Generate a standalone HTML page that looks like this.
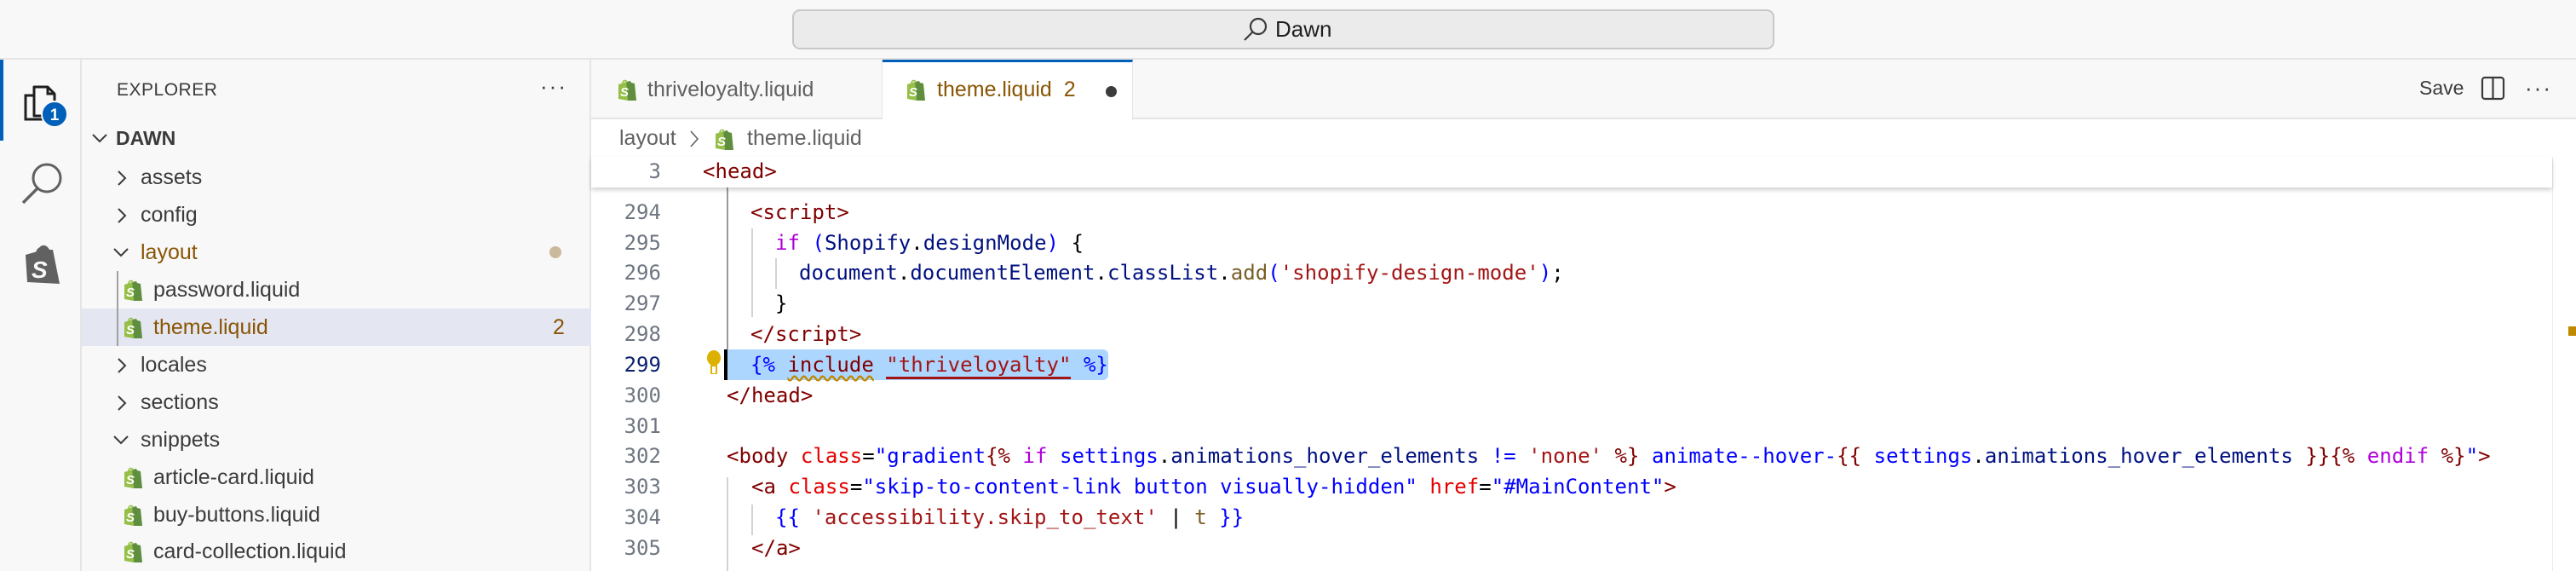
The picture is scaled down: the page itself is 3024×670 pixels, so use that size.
<!DOCTYPE html>
<html><head><meta charset="utf-8"><style>
*{margin:0;padding:0;box-sizing:border-box}
body{width:3024px;height:670px;overflow:hidden;background:#fff;font-family:"Liberation Sans",sans-serif;position:relative}
.abs{position:absolute}
#title{left:0;top:0;width:3024px;height:70px;background:#f8f8f8;border-bottom:2px solid #e5e5e5}
#search{left:930px;top:11px;width:1153px;height:47px;background:#ebebeb;border:2px solid #c8c8c8;border-radius:9px}
#act{left:0;top:70px;width:96px;height:600px;background:#f8f8f8;border-right:2px solid #e5e5e5}
#side{left:96px;top:70px;width:598px;height:600px;background:#f8f8f8;border-right:2px solid #e5e5e5}
.row{position:absolute;left:0;width:598px;height:44px;line-height:44px;font-size:25px;color:#3b3b3b}
.chev{position:absolute;top:0}
#tabs{left:694px;top:70px;width:2330px;height:70px;background:#f8f8f8;border-bottom:2px solid #e5e5e5}
.tab{position:absolute;top:0;height:70px;font-size:25px;line-height:70px}
.code{position:absolute;font-family:"DejaVu Sans Mono","Liberation Mono",monospace;font-size:24.05px;white-space:pre;height:36px;line-height:36px}
.ln{position:absolute;left:700px;width:76px;text-align:right;font-family:"DejaVu Sans Mono","Liberation Mono",monospace;font-size:24.05px;color:#6e7681;height:36px;line-height:36px}
.t{color:#800000}.a{color:#e50000}.s{color:#0000ff}.k{color:#af00db}.v{color:#001080}.f{color:#795e26}.r{color:#a31515}.b{color:#0000ff}
.guide{position:absolute;width:2px;background:#d3d3d3}
</style></head><body>
<div id="title" class="abs"></div>
<div id="search" class="abs"></div>
<svg class="abs" style="left:1458px;top:20px" width="32" height="30" viewBox="0 0 32 30"><circle cx="19" cy="11" r="9" fill="none" stroke="#3b3b3b" stroke-width="2.2"/><line x1="12.5" y1="17.5" x2="3" y2="27" stroke="#3b3b3b" stroke-width="2.2"/></svg>
<div class="abs" style="left:1497px;top:18px;font-size:26px;color:#1f1f1f;line-height:32px">Dawn</div>

<div id="act" class="abs"></div>
<div class="abs" style="left:0;top:70px;width:4px;height:95px;background:#005fb8"></div>
<svg class="abs" style="left:24px;top:90px" width="60" height="60" viewBox="0 0 60 60"><path d="M16 12h16l8 8v26H16z" fill="none" stroke="#1f1f1f" stroke-width="3" stroke-linejoin="round"/><path d="M32 12v8h8" fill="none" stroke="#1f1f1f" stroke-width="3"/><path d="M16 22H6v28h22" fill="none" stroke="#1f1f1f" stroke-width="3"/><circle cx="40" cy="44" r="15" fill="#005fb8" stroke="#f8f8f8" stroke-width="2"/><text x="40" y="51" text-anchor="middle" font-family="Liberation Sans" font-weight="bold" font-size="19" fill="#fff">1</text></svg>
<svg class="abs" style="left:22px;top:185px" width="56" height="60" viewBox="0 0 56 60"><circle cx="33" cy="24" r="16" fill="none" stroke="#616161" stroke-width="3"/><line x1="22" y1="36" x2="5" y2="53" stroke="#616161" stroke-width="3.4"/></svg>
<svg class="abs" style="left:26px;top:285px" width="46" height="50" viewBox="0 0 46 50"><path d="M4 14l14-4c2-8 10-10 14-2l4 0 8 40-38-2z" fill="#616161"/><path d="M17 12c1-6 6-8 9-4" fill="none" stroke="#616161" stroke-width="2"/><text x="11" y="41" font-family="Liberation Sans" font-weight="bold" font-style="italic" font-size="28" fill="#f8f8f8">S</text></svg>

<div id="side" class="abs">
 <div class="abs" style="left:41px;top:24px;font-size:21px;color:#3b3b3b;letter-spacing:0.5px">EXPLORER</div>
 <div class="abs" style="left:538px;top:16px;font-size:26px;color:#3b3b3b;letter-spacing:2px">···</div>
 <div class="row" style="top:70px"><svg class="chev" style="left:11px;top:14px" width="20" height="16"><path d="M2 4l8 8 8-8" fill="none" stroke="#3b3b3b" stroke-width="2"/></svg><span style="position:absolute;left:40px;font-weight:bold;font-size:23px">DAWN</span></div>
 <div class="row" style="top:116px"><svg class="chev" style="left:40px;top:13px" width="14" height="20"><path d="M3 2l8 8-8 8" fill="none" stroke="#3b3b3b" stroke-width="2"/></svg><span style="position:absolute;left:69px">assets</span></div>
 <div class="row" style="top:160px"><svg class="chev" style="left:40px;top:13px" width="14" height="20"><path d="M3 2l8 8-8 8" fill="none" stroke="#3b3b3b" stroke-width="2"/></svg><span style="position:absolute;left:69px">config</span></div>
 <div class="row" style="top:204px"><svg class="chev" style="left:36px;top:14px" width="20" height="16"><path d="M2 4l8 8 8-8" fill="none" stroke="#3b3b3b" stroke-width="2"/></svg><span style="position:absolute;left:69px;color:#895503">layout</span><span style="position:absolute;left:549px;top:15px;width:14px;height:14px;border-radius:7px;background:#cbb99c"></span></div>
 <div class="row" style="top:248px"><span style="position:absolute;left:84px;color:#3b3b3b">password.liquid</span></div>
 <div class="row" style="top:292px;background:#e4e6f1"><span style="position:absolute;left:84px;color:#895503">theme.liquid</span><span style="position:absolute;left:553px;color:#895503">2</span></div>
 <div class="abs" style="left:41px;top:248px;width:2px;height:88px;background:#a0a0a0"></div>
 <div class="row" style="top:336px"><svg class="chev" style="left:40px;top:13px" width="14" height="20"><path d="M3 2l8 8-8 8" fill="none" stroke="#3b3b3b" stroke-width="2"/></svg><span style="position:absolute;left:69px">locales</span></div>
 <div class="row" style="top:380px"><svg class="chev" style="left:40px;top:13px" width="14" height="20"><path d="M3 2l8 8-8 8" fill="none" stroke="#3b3b3b" stroke-width="2"/></svg><span style="position:absolute;left:69px">sections</span></div>
 <div class="row" style="top:424px"><svg class="chev" style="left:36px;top:14px" width="20" height="16"><path d="M2 4l8 8 8-8" fill="none" stroke="#3b3b3b" stroke-width="2"/></svg><span style="position:absolute;left:69px">snippets</span></div>
 <div class="row" style="top:468px"><span style="position:absolute;left:84px">article-card.liquid</span></div>
 <div class="row" style="top:512px"><span style="position:absolute;left:84px">buy-buttons.liquid</span></div>
 <div class="row" style="top:555px"><span style="position:absolute;left:84px">card-collection.liquid</span></div>
</div>

<svg width="0" height="0" style="position:absolute"><defs><symbol id="shp" viewBox="0 0 24 26"><path d="M2 7l9-3 2 22-11-2z" fill="#95bf47"/><path d="M11 4l5-1 1 2 4 1 2 20-10 0z" fill="#5e8e3e"/><path d="M7 6c0-4 4-5 5-1" fill="none" stroke="#95bf47" stroke-width="1.5"/><text x="4" y="21" font-family="Liberation Sans" font-weight="bold" font-style="italic" font-size="15" fill="#fff">S</text></symbol></defs></svg>
<svg class="abs" style="left:144px;top:327px" width="24" height="26"><use href="#shp"/></svg>
<svg class="abs" style="left:144px;top:371px" width="24" height="26"><use href="#shp"/></svg>
<svg class="abs" style="left:144px;top:547px" width="24" height="26"><use href="#shp"/></svg>
<svg class="abs" style="left:144px;top:591px" width="24" height="26"><use href="#shp"/></svg>
<svg class="abs" style="left:144px;top:634px" width="24" height="26"><use href="#shp"/></svg>

<div id="tabs" class="abs"></div>
<div class="tab" style="left:694px;top:70px;width:342px;border-right:1px solid #e5e5e5;color:#616161"><svg class="abs" style="left:30px;top:22px" width="24" height="26"><use href="#shp"/></svg><span style="position:absolute;left:66px">thriveloyalty.liquid</span></div>
<div class="tab" style="left:1036px;top:70px;width:294px;height:71px;background:#fff;border-top:3px solid #005fb8;border-right:1px solid #e5e5e5;color:#895503"><svg class="abs" style="left:27px;top:19px" width="24" height="26"><use href="#shp"/></svg><span style="position:absolute;left:64px;top:-3px">theme.liquid&nbsp;&nbsp;2</span><span style="position:absolute;left:262px;top:28px;width:13px;height:13px;border-radius:7px;background:#3b3b3b"></span></div>
<div class="abs" style="left:2840px;top:90px;font-size:23px;color:#3b3b3b">Save</div>
<svg class="abs" style="left:2912px;top:89px" width="30" height="30"><rect x="2" y="2" width="25" height="25" rx="3" fill="none" stroke="#3b3b3b" stroke-width="2.2"/><line x1="14.5" y1="2" x2="14.5" y2="27" stroke="#3b3b3b" stroke-width="2.2"/></svg>
<div class="abs" style="left:2964px;top:88px;font-size:26px;color:#3b3b3b;letter-spacing:2px">···</div>

<div class="abs" style="left:727px;top:148px;font-size:25px;color:#616161">layout</div>
<svg class="abs" style="left:808px;top:152px" width="14" height="22"><path d="M3 2l8 9-8 9" fill="none" stroke="#616161" stroke-width="1.6"/></svg>
<svg class="abs" style="left:838px;top:150px" width="24" height="26"><use href="#shp"/></svg>
<div class="abs" style="left:877px;top:148px;font-size:25px;color:#616161">theme.liquid</div>

<div class="abs" style="left:694px;top:184px;width:2302px;height:36px;background:#fff;box-shadow:0 3px 5px rgba(0,0,0,0.18);z-index:2"></div>
<div class="ln" style="top:183px;z-index:3">3</div>
<div class="code" style="left:825px;top:183px;z-index:3"><span class="t">&lt;head&gt;</span></div>

<div class="guide" style="left:853px;top:220px;height:190px;background:#999"></div>
<div class="guide" style="left:882px;top:268px;height:104px"></div>
<div class="guide" style="left:910px;top:303px;height:36px"></div>
<div class="guide" style="left:853px;top:560px;height:110px"></div>
<div class="guide" style="left:882px;top:592px;height:36px"></div>

<div class="abs" style="left:853px;top:410px;width:448px;height:36px;background:#add6ff;border-radius:0 6px 6px 0"></div>
<div class="abs" style="left:850px;top:410px;width:4px;height:36px;background:#000"></div>
<svg class="abs" style="left:829px;top:410px" width="18" height="32"><ellipse cx="9" cy="10" rx="8" ry="9" fill="#ddb100"/><rect x="5" y="18" width="8" height="11" rx="1" fill="#ddb100"/><rect x="7" y="20" width="4" height="8" fill="#fff"/></svg>

<div class="ln" style="top:231px">294</div>
<div class="code" style="left:881px;top:231px"><span class="t">&lt;script&gt;</span></div>
<div class="ln" style="top:267px">295</div>
<div class="code" style="left:910px;top:267px"><span class="k">if</span> <span class="b">(</span><span class="v">Shopify</span>.<span class="v">designMode</span><span class="b">)</span> {</div>
<div class="ln" style="top:302px">296</div>
<div class="code" style="left:938px;top:302px"><span class="v">document</span>.<span class="v">documentElement</span>.<span class="v">classList</span>.<span class="f">add</span><span class="b">(</span><span class="r">'shopify-design-mode'</span><span class="b">)</span>;</div>
<div class="ln" style="top:338px">297</div>
<div class="code" style="left:910px;top:338px">}</div>
<div class="ln" style="top:374px">298</div>
<div class="code" style="left:881px;top:374px"><span class="t">&lt;/script&gt;</span></div>
<div class="ln" style="top:410px;color:#0b216f">299</div>
<div class="code" style="left:881px;top:410px"><span class="b">{%</span> <span class="t" style="text-decoration:underline wavy #bf8803;text-underline-offset:4px">include</span> <span class="r" style="border-bottom:3px solid #a31515">"thriveloyalty"</span> <span class="b">%}</span></div>
<div class="ln" style="top:446px">300</div>
<div class="code" style="left:853px;top:446px"><span class="t">&lt;/head&gt;</span></div>
<div class="ln" style="top:482px">301</div>
<div class="ln" style="top:517px">302</div>
<div class="code" style="left:853px;top:517px"><span class="t">&lt;body</span> <span class="a">class</span>=<span class="s">"gradient</span><span class="t">{%</span> <span class="k">if</span> <span class="s">settings</span>.<span class="v">animations_hover_elements</span> <span class="s">!=</span> <span class="r">'none'</span> <span class="t">%}</span> <span class="s">animate--hover-</span><span class="t">{{</span> <span class="s">settings</span>.<span class="v">animations_hover_elements</span> <span class="t">}}{%</span> <span class="k">endif</span> <span class="t">%}</span><span class="s">"</span><span class="t">&gt;</span></div>
<div class="ln" style="top:553px">303</div>
<div class="code" style="left:882px;top:553px"><span class="t">&lt;a</span> <span class="a">class</span>=<span class="s">"skip-to-content-link button visually-hidden"</span> <span class="a">href</span>=<span class="s">"#MainContent"</span><span class="t">&gt;</span></div>
<div class="ln" style="top:589px">304</div>
<div class="code" style="left:910px;top:589px"><span class="b">{{</span> <span class="r">'accessibility.skip_to_text'</span> | <span class="f">t</span> <span class="b">}}</span></div>
<div class="ln" style="top:625px">305</div>
<div class="code" style="left:882px;top:625px"><span class="t">&lt;/a&gt;</span></div>

<div class="abs" style="left:2996px;top:184px;width:1px;height:486px;background:#ececec"></div>
<div class="abs" style="left:3015px;top:383px;width:9px;height:11px;background:#c08a00"></div>
</body></html>
